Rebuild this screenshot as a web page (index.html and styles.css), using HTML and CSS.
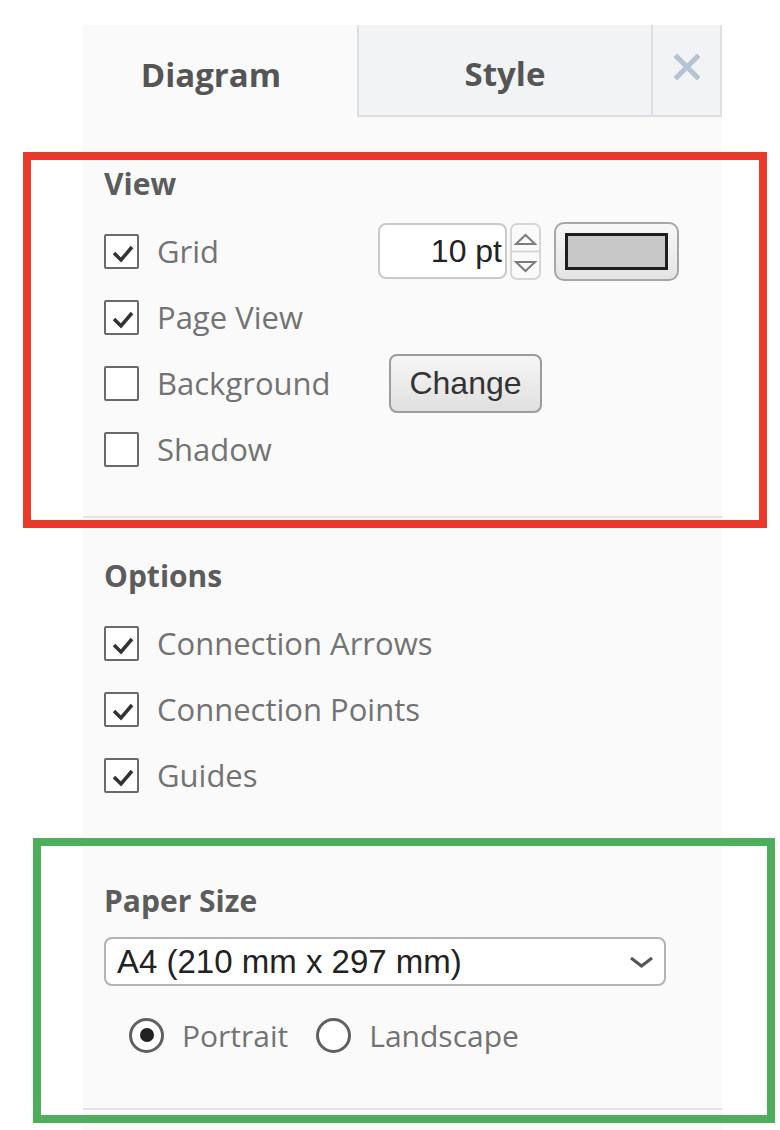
FILE: index.html
```html
<!DOCTYPE html>
<html>
<head>
<meta charset="utf-8">
<title>Format Panel</title>
<link rel="stylesheet" href="styles.css">
</head>
<body>
<div class="page">
  <div class="panel">
    <div class="tabs">
      <div class="tab tab-diagram">Diagram</div>
      <div class="tab tab-style">Style</div>
      <div class="tab tab-close">
        <svg class="close-icon" width="26" height="26" viewBox="0 0 26 26"><path d="M3 3 L23 23 M23 3 L3 23" stroke="#b6c3d2" stroke-width="5" stroke-linecap="square"/></svg>
      </div>
    </div>

    <div class="section section-view">
      <div class="heading">View</div>
      <div class="rows">
        <div class="row">
          <div class="check check-grid">
            <span class="cb"><svg width="30" height="30" viewBox="0 0 30 30"><polyline points="7,17 14,24 25,11" fill="none" stroke="#333" stroke-width="3.5"/></svg></span>
            <span class="label">Grid</span>
          </div>
          <div class="num-input">10 pt</div>
          <svg class="spinner" width="31" height="57" viewBox="0 0 31 57">
            <rect x="1" y="1" width="29" height="55" rx="6" fill="#fafafa" stroke="#d6d6d6" stroke-width="2"/>
            <line x1="1" y1="28.5" x2="30" y2="28.5" stroke="#d6d6d6" stroke-width="2"/>
            <polygon points="6,21 15.5,12 25,21" fill="none" stroke="#7c7c7c" stroke-width="2"/>
            <polygon points="6,39 25,39 15.5,48" fill="none" stroke="#7c7c7c" stroke-width="2"/>
          </svg>
          <div class="color-btn"><span class="swatch"></span></div>
        </div>
        <div class="row">
          <div class="check">
            <span class="cb"><svg width="30" height="30" viewBox="0 0 30 30"><polyline points="7,17 14,24 25,11" fill="none" stroke="#333" stroke-width="3.5"/></svg></span>
            <span class="label">Page View</span>
          </div>
        </div>
        <div class="row">
          <div class="check check-bg">
            <span class="cb"></span>
            <span class="label">Background</span>
          </div>
          <div class="btn">Change</div>
        </div>
        <div class="row">
          <div class="check">
            <span class="cb"></span>
            <span class="label">Shadow</span>
          </div>
        </div>
      </div>
    </div>

    <div class="section section-options">
      <div class="heading">Options</div>
      <div class="rows">
        <div class="row">
          <div class="check">
            <span class="cb"><svg width="30" height="30" viewBox="0 0 30 30"><polyline points="7,17 14,24 25,11" fill="none" stroke="#333" stroke-width="3.5"/></svg></span>
            <span class="label">Connection Arrows</span>
          </div>
        </div>
        <div class="row">
          <div class="check">
            <span class="cb"><svg width="30" height="30" viewBox="0 0 30 30"><polyline points="7,17 14,24 25,11" fill="none" stroke="#333" stroke-width="3.5"/></svg></span>
            <span class="label">Connection Points</span>
          </div>
        </div>
        <div class="row">
          <div class="check">
            <span class="cb"><svg width="30" height="30" viewBox="0 0 30 30"><polyline points="7,17 14,24 25,11" fill="none" stroke="#333" stroke-width="3.5"/></svg></span>
            <span class="label">Guides</span>
          </div>
        </div>
      </div>
    </div>

    <div class="section section-paper">
      <div class="heading">Paper Size</div>
      <div class="select">
        <span class="select-text">A4 (210 mm x 297 mm)</span>
        <svg class="chevron" width="25" height="14" viewBox="0 0 25 14"><polyline points="2,3 12.5,11 23,3" fill="none" stroke="#555" stroke-width="3"/></svg>
      </div>
      <div class="radio-row">
        <span class="radio radio-on"></span>
        <span class="label label-radio">Portrait</span>
        <span class="radio radio-gap"></span>
        <span class="label label-radio">Landscape</span>
      </div>
    </div>
  </div>

  <div class="mark mark-red"></div>
  <div class="mark mark-green"></div>
</div>
</body>
</html>
```

FILE: styles.css
```css
html, body {
  margin: 0;
  padding: 0;
  background: #ffffff;
}

body {
  font-family: "Open Sans", "Noto Sans", sans-serif;
}

.page {
  position: relative;
  width: 780px;
  height: 1130px;
  overflow: hidden;
  padding-top: 25px;
  box-sizing: border-box;
}

.panel {
  margin-left: 83px;
  width: 639px;
  min-height: 1105px;
  background: #fafafa;
}

/* Tabs */
.tabs {
  display: flex;
  height: 92px;
}

.tab {
  display: flex;
  align-items: center;
  justify-content: center;
  box-sizing: border-box;
  font-size: 33px;
  font-weight: 700;
  color: #555555;
  padding-top: 6px;
}

.tab-diagram {
  width: 274px;
  padding-right: 18px;
}

.tab-style {
  width: 294px;
  background: #f1f3f5;
  border-left: 2px solid #dcdfe3;
  border-bottom: 2px solid #dcdfe3;
}

.tab-close {
  flex: 1;
  background: #f1f3f5;
  border-left: 2px solid #dcdfe3;
  border-bottom: 2px solid #dcdfe3;
  border-right: 2px solid #dcdfe3;
  padding-top: 0;
  padding-bottom: 6px;
}

/* Sections */
.section {
  padding-left: 21px;
  border-bottom: 2px solid #e3e3e3;
}

.section-view {
  padding-top: 47px;
  padding-bottom: 34px;
}

.section-options {
  padding-top: 38px;
  padding-bottom: 30px;
}

.section-paper {
  padding-top: 41px;
  padding-bottom: 40px;
}

.heading {
  height: 40px;
  line-height: 40px;
  font-size: 30px;
  font-weight: 700;
  color: #5c5c5c;
}

.rows {
  margin-top: 14px;
}

.row {
  display: flex;
  align-items: center;
  height: 66px;
}

.check {
  display: flex;
  align-items: center;
}

.check-grid {
  width: 274px;
}

.check-bg {
  width: 285px;
}

.cb {
  display: flex;
  align-items: center;
  justify-content: center;
  width: 35px;
  height: 35px;
  box-sizing: border-box;
  border: 2px solid #6a6a6a;
  border-radius: 2px;
  background: #ffffff;
  margin-right: 18px;
  flex: none;
}

.label {
  font-size: 31px;
  color: #737373;
  white-space: nowrap;
}

.label-radio {
  font-size: 30px;
}

/* Grid size input */
.num-input {
  width: 129px;
  height: 56px;
  box-sizing: border-box;
  border: 2px solid #c9c9c9;
  border-radius: 8px;
  background: #ffffff;
  font-family: "Liberation Sans", Arial, sans-serif;
  font-size: 32px;
  color: #222222;
  display: flex;
  align-items: center;
  justify-content: flex-end;
  padding-right: 3px;
  margin-right: 3px;
}

.spinner {
  display: block;
  flex: none;
}

.color-btn {
  width: 125px;
  height: 59px;
  box-sizing: border-box;
  border: 2px solid #a6a6a6;
  border-radius: 10px;
  background: linear-gradient(#f7f7f7, #e4e4e4);
  margin-left: 13px;
  display: flex;
  align-items: center;
  justify-content: center;
}

.swatch {
  width: 103px;
  height: 37px;
  box-sizing: border-box;
  border: 3px solid #1e1e1e;
  background: #c8c8c8;
}

.btn {
  width: 153px;
  height: 59px;
  box-sizing: border-box;
  border: 2px solid #9c9c9c;
  border-radius: 8px;
  background: linear-gradient(#f6f6f6, #e0e0e0);
  font-family: "Liberation Sans", Arial, sans-serif;
  font-size: 32px;
  color: #333333;
  display: flex;
  align-items: center;
  justify-content: center;
}

/* Paper size */
.select {
  margin-top: 16px;
  width: 562px;
  height: 49px;
  box-sizing: border-box;
  border: 2px solid #b3b3b3;
  border-radius: 8px;
  background: #ffffff;
  display: flex;
  align-items: center;
  justify-content: space-between;
  padding-left: 11px;
  padding-right: 10px;
}

.select-text {
  font-family: "Liberation Sans", Arial, sans-serif;
  font-size: 33px;
  color: #222222;
  white-space: nowrap;
}

.chevron {
  display: block;
}

.radio-row {
  margin-top: 16px;
  height: 66px;
  display: flex;
  align-items: center;
  padding-left: 25px;
}

.radio {
  width: 35px;
  height: 35px;
  box-sizing: border-box;
  border: 3px solid #606060;
  border-radius: 50%;
  background: #ffffff;
  margin-right: 18px;
  display: flex;
  align-items: center;
  justify-content: center;
  flex: none;
}

.radio-on::after {
  content: "";
  width: 14px;
  height: 14px;
  border-radius: 50%;
  background: #222222;
}

.radio-gap {
  margin-left: 28px;
}

/* Annotation frames */
.mark {
  position: absolute;
  box-sizing: border-box;
  border: 8px solid;
  pointer-events: none;
}

.mark-red {
  left: 23px;
  top: 152px;
  width: 744px;
  height: 376px;
  border-color: #e8392b;
}

.mark-green {
  left: 33px;
  top: 838px;
  width: 742px;
  height: 285px;
  border-color: #4fae5c;
}
```
